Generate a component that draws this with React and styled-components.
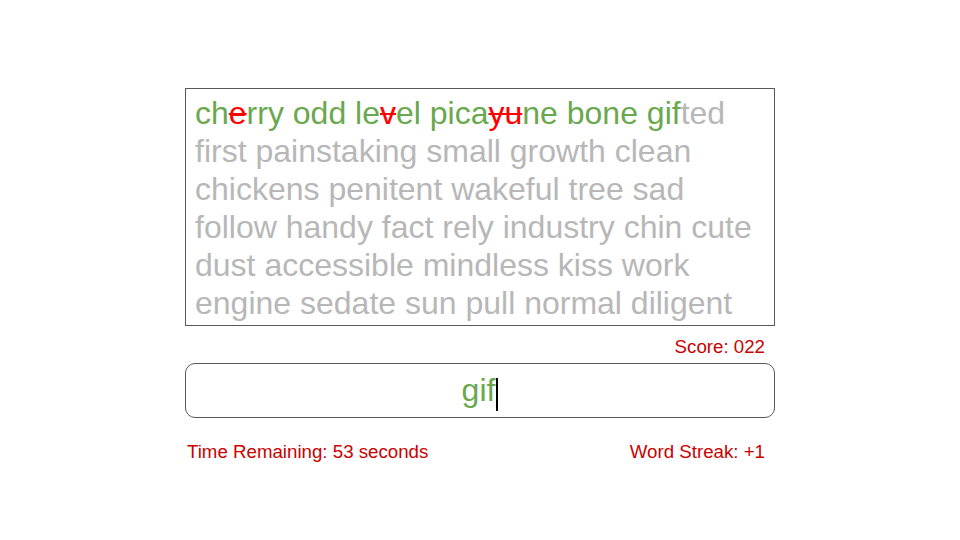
import React from "react";
import styled, { createGlobalStyle } from "styled-components";

const GlobalStyle = createGlobalStyle`
  html, body {
    margin: 0;
    padding: 0;
    background: #ffffff;
    font-family: "Liberation Sans", Arial, sans-serif;
  }
`;

const Page = styled.div`
  width: 960px;
  height: 540px;
  display: flex;
  flex-direction: column;
  align-items: center;
  padding-top: 88px;
  box-sizing: border-box;
`;

const Column = styled.div`
  width: 590px;
  display: flex;
  flex-direction: column;
`;

const WordBox = styled.div`
  border: 1px solid #595959;
  padding: 5px 9px;
  font-size: 32px;
  line-height: 38px;
  color: #b7b7b7;
  height: 238px;
  box-sizing: border-box;
`;

const Line = styled.div`
  white-space: nowrap;
`;

const Done = styled.span`
  color: #6aa84f;
`;

const Wrong = styled.span`
  color: #ff0000;
  text-decoration: line-through;
  text-decoration-thickness: 2px;
`;

const InfoRow = styled.div`
  display: flex;
  justify-content: ${(p) => p.$justify || "flex-end"};
  padding: 0 10px 0 2px;
  font-size: 18.7px;
  line-height: 21px;
  color: #cc0000;
  margin-top: ${(p) => p.$top}px;
`;

const InputBox = styled.div`
  margin-top: 6px;
  height: 55px;
  border: 1px solid #595959;
  border-radius: 10px;
  box-sizing: border-box;
  display: flex;
  align-items: center;
  justify-content: center;
  font-size: 32px;
  color: #6aa84f;
`;

const Caret = styled.span`
  display: inline-block;
  width: 2px;
  height: 33px;
  margin-top: 8px;
  background: #000000;
  margin-left: 1px;
`;

const lines = [
  "first painstaking small growth clean",
  "chickens penitent wakeful tree sad",
  "follow handy fact rely industry chin cute",
  "dust accessible mindless kiss work",
  "engine sedate sun pull normal diligent",
];

export default function App() {
  return (
    <>
      <GlobalStyle />
      <Page>
        <Column>
          <WordBox>
            <Line>
              <Done>
                ch<Wrong>e</Wrong>rry odd le<Wrong>v</Wrong>el pica
                <Wrong>yu</Wrong>ne bone gif
              </Done>
              ted
            </Line>
            {lines.map((l) => (
              <Line key={l}>{l}</Line>
            ))}
          </WordBox>
          <InfoRow $top={10}>Score: 022</InfoRow>
          <InputBox>
            gif
            <Caret />
          </InputBox>
          <InfoRow $top={23} $justify="space-between">
            <span>Time Remaining: 53 seconds</span>
            <span>Word Streak: +1</span>
          </InfoRow>
        </Column>
      </Page>
    </>
  );
}
